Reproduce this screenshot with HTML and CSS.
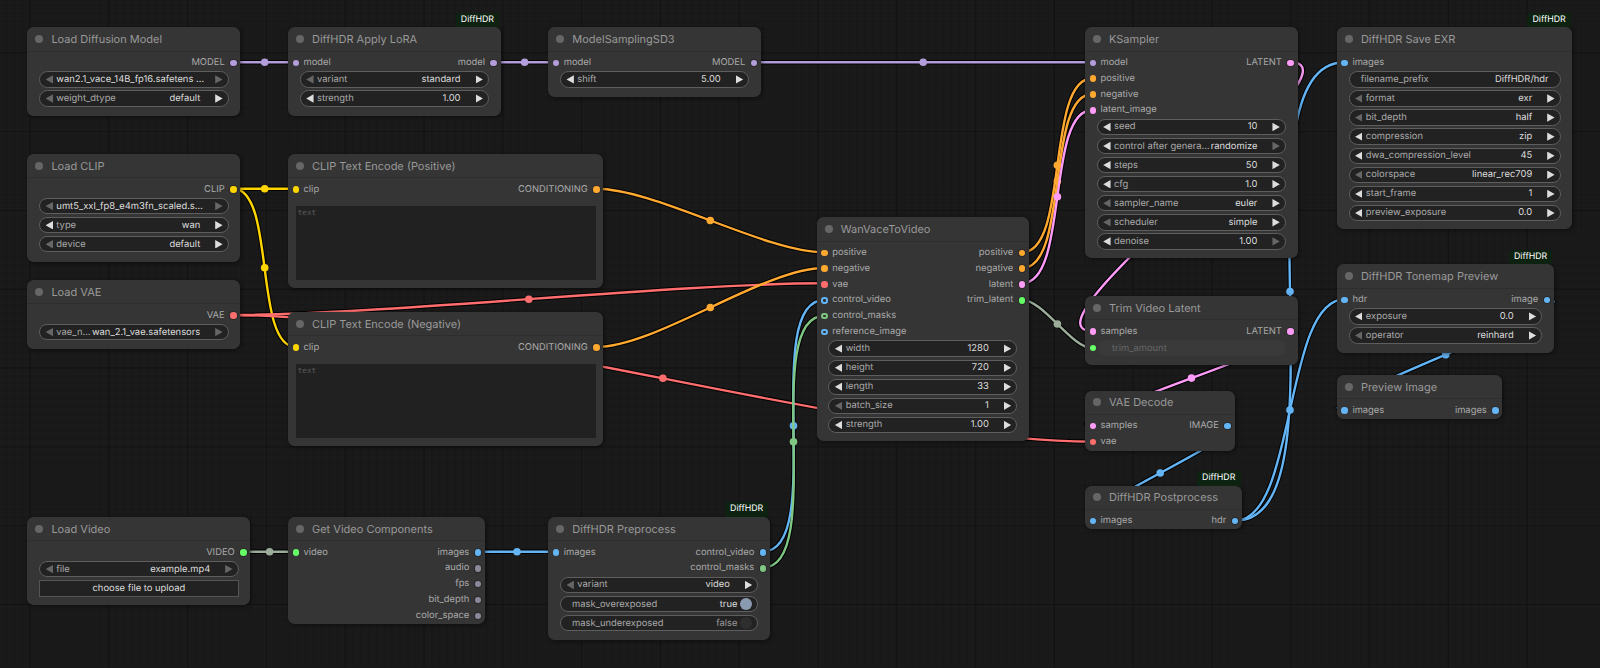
FILE: index.html
```html
<!DOCTYPE html>
<html lang="en">
<head>
    <meta charset="UTF-8">
    <title>DiffHDR workflow</title>
    <link rel="stylesheet" href="styles.css">
</head>
<body>
<div class="canvas">
    <svg class="links" width="1600" height="668" viewBox="0 0 1600 668">
        <g class="outline">
            <path d="M233.3 62.3H296"/>
            <path d="M493.6 62.3H556"/>
            <path d="M753.8 62.3H1092.4"/>
            <path d="M233.3 188.7H295.8"/>
            <path d="M233.3 188.7C275.8 188.7 253.3 347 295.8 347"/>
            <path d="M233.3 315C381 315 676 283.3 824.3 283.3"/>
            <path d="M233.3 315C450.3 315 875.4 441.7 1092.4 441.7"/>
            <path d="M596.3 188.7C655.5 188.7 765.1 252.3 824.3 252.3"/>
            <path d="M596.3 347C656.6 347 764 268 824.3 268"/>
            <path d="M1022.3 252.3C1069.2 252.3 1045.5 78.3 1092.4 78.3"/>
            <path d="M1022.3 268C1069.2 268 1045.5 94 1092.4 94"/>
            <path d="M1022.3 283.3C1069.2 283.3 1045.5 110 1092.4 110"/>
            <path d="M1022.3 300C1043.5 300 1071.5 348.3 1092.7 348.3"/>
            <path d="M1290.4 62.3C1373.8 62.3 1009.3 331 1092.7 331"/>
            <path d="M1290.3 331C1345 331 1038 425.3 1092.7 425.3"/>
            <path d="M1227.7 425.3C1269 425.3 1051.4 520.7 1092.7 520.7"/>
            <path d="M1235.2 520.7C1353 520.7 1227 62.3 1344.8 62.3"/>
            <path d="M1235.2 520.7C1297 520.7 1283 299.3 1344.8 299.3"/>
            <path d="M1546.5 299.3C1604 299.3 1287.3 410 1344.8 410"/>
            <path d="M243.3 551.7H295.7"/>
            <path d="M477.7 551.7H556.3"/>
            <path d="M762.7 551.7C827.5 551.7 759.5 300 824.3 300"/>
            <path d="M762.7 567.7C827.5 567.7 759.5 315.7 824.3 315.7"/>
        </g>
        <g class="wire model">
            <path d="M233.3 62.3H296"/><path d="M493.6 62.3H556"/><path d="M753.8 62.3H1092.4"/>
            <circle cx="264.7" cy="62.3" r="3.8"/><circle cx="524.6" cy="62.3" r="3.8"/><circle cx="923.2" cy="62.3" r="3.8"/>
        </g>
        <g class="wire clip">
            <path d="M233.3 188.7H295.8"/><path d="M233.3 188.7C275.8 188.7 253.3 347 295.8 347"/>
            <circle cx="264.7" cy="188.7" r="3.8"/><circle cx="264.7" cy="267.8" r="3.8"/>
        </g>
        <g class="wire vae">
            <path d="M233.3 315C381 315 676 283.3 824.3 283.3"/><path d="M233.3 315C450.3 315 875.4 441.7 1092.4 441.7"/>
            <circle cx="528.8" cy="299.2" r="3.8"/><circle cx="662.9" cy="378.3" r="3.8"/>
        </g>
        <g class="wire cond">
            <path d="M596.3 188.7C655.5 188.7 765.1 252.3 824.3 252.3"/><path d="M596.3 347C656.6 347 764 268 824.3 268"/>
            <path d="M1022.3 252.3C1069.2 252.3 1045.5 78.3 1092.4 78.3"/><path d="M1022.3 268C1069.2 268 1045.5 94 1092.4 94"/>
            <circle cx="710.3" cy="220.5" r="3.8"/><circle cx="710.3" cy="307.5" r="3.8"/>
            <circle cx="1057.4" cy="165.3" r="3.8"/><circle cx="1057.4" cy="181" r="3.8"/>
        </g>
        <g class="wire latent">
            <path d="M1022.3 283.3C1069.2 283.3 1045.5 110 1092.4 110"/>
            <path d="M1290.4 62.3C1373.8 62.3 1009.3 331 1092.7 331"/>
            <path d="M1290.3 331C1345 331 1038 425.3 1092.7 425.3"/>
            <circle cx="1057.4" cy="196.7" r="3.8"/><circle cx="1191.5" cy="378.1" r="3.8"/>
        </g>
        <g class="wire muted">
            <path d="M1022.3 300C1043.5 300 1071.5 348.3 1092.7 348.3"/><path d="M243.3 551.7H295.7"/>
            <circle cx="1057.4" cy="324" r="3.8"/><circle cx="269.6" cy="551.7" r="3.8"/>
        </g>
        <g class="wire image">
            <path d="M477.7 551.7H556.3"/>
            <path d="M1227.7 425.3C1269 425.3 1051.4 520.7 1092.7 520.7"/>
            <path d="M1235.2 520.7C1353 520.7 1227 62.3 1344.8 62.3"/>
            <path d="M1235.2 520.7C1297 520.7 1283 299.3 1344.8 299.3"/>
            <path d="M1546.5 299.3C1604 299.3 1287.3 410 1344.8 410"/>
            <path d="M762.7 551.7C827.5 551.7 759.5 300 824.3 300"/>
            <circle cx="517" cy="551.7" r="3.8"/><circle cx="1160.2" cy="473" r="3.8"/>
            <circle cx="1290" cy="291.5" r="3.8"/><circle cx="1290" cy="410" r="3.8"/>
            <circle cx="1445.7" cy="354.7" r="3.8"/><circle cx="793.5" cy="425.8" r="3.8"/>
        </g>
        <g class="wire mask">
            <path d="M762.7 567.7C827.5 567.7 759.5 315.7 824.3 315.7"/>
            <circle cx="793.5" cy="441.7" r="3.8"/>
        </g>
    </svg>

    <!-- top row -->
    <div class="node load-model">
        <div class="title"><i></i>Load Diffusion Model</div>
        <div class="rows">
            <div class="row"><span></span><span class="out">MODEL<b class="dot model"></b></span></div>
        </div>
        <div class="widgets">
            <div class="widget"><u class="arrow left dim"></u><span class="value name">wan2.1_vace_14B_fp16.safetens …</span><u class="arrow right dim"></u></div>
            <div class="widget"><u class="arrow left dim"></u><span class="label">weight_dtype</span><span class="value">default</span><u class="arrow right"></u></div>
        </div>
    </div>

    <div class="node apply-lora">
        <div class="badge">DiffHDR</div>
        <div class="title"><i></i>DiffHDR Apply LoRA</div>
        <div class="rows">
            <div class="row"><span class="in"><b class="dot model"></b>model</span><span class="out">model<b class="dot model"></b></span></div>
        </div>
        <div class="widgets">
            <div class="widget"><u class="arrow left dim"></u><span class="label">variant</span><span class="value">standard</span><u class="arrow right"></u></div>
            <div class="widget"><u class="arrow left"></u><span class="label">strength</span><span class="value">1.00</span><u class="arrow right"></u></div>
        </div>
    </div>

    <div class="node model-sampling">
        <div class="title"><i></i>ModelSamplingSD3</div>
        <div class="rows">
            <div class="row"><span class="in"><b class="dot model"></b>model</span><span class="out">MODEL<b class="dot model"></b></span></div>
        </div>
        <div class="widgets">
            <div class="widget"><u class="arrow left"></u><span class="label">shift</span><span class="value">5.00</span><u class="arrow right"></u></div>
        </div>
    </div>

    <div class="node ksampler">
        <div class="title"><i></i>KSampler</div>
        <div class="rows">
            <div class="row"><span class="in"><b class="dot model"></b>model</span><span class="out">LATENT<b class="dot latent"></b></span></div>
            <div class="row"><span class="in"><b class="dot cond"></b>positive</span></div>
            <div class="row"><span class="in"><b class="dot cond"></b>negative</span></div>
            <div class="row"><span class="in"><b class="dot latent"></b>latent_image</span></div>
        </div>
        <div class="widgets">
            <div class="widget"><u class="arrow left"></u><span class="label">seed</span><span class="value">10</span><u class="arrow right"></u></div>
            <div class="widget"><u class="arrow left"></u><span class="label">control after genera…</span><span class="value">randomize</span><u class="arrow right dim"></u></div>
            <div class="widget"><u class="arrow left"></u><span class="label">steps</span><span class="value">50</span><u class="arrow right"></u></div>
            <div class="widget"><u class="arrow left"></u><span class="label">cfg</span><span class="value">1.0</span><u class="arrow right"></u></div>
            <div class="widget"><u class="arrow left dim"></u><span class="label">sampler_name</span><span class="value">euler</span><u class="arrow right"></u></div>
            <div class="widget"><u class="arrow left dim"></u><span class="label">scheduler</span><span class="value">simple</span><u class="arrow right"></u></div>
            <div class="widget"><u class="arrow left"></u><span class="label">denoise</span><span class="value">1.00</span><u class="arrow right dim"></u></div>
        </div>
    </div>

    <div class="node save-exr">
        <div class="badge">DiffHDR</div>
        <div class="title"><i></i>DiffHDR Save EXR</div>
        <div class="rows">
            <div class="row"><span class="in"><b class="dot image"></b>images</span></div>
        </div>
        <div class="widgets">
            <div class="widget plain"><span class="label">filename_prefix</span><span class="value">DiffHDR/hdr</span></div>
            <div class="widget"><u class="arrow left dim"></u><span class="label">format</span><span class="value">exr</span><u class="arrow right"></u></div>
            <div class="widget"><u class="arrow left dim"></u><span class="label">bit_depth</span><span class="value">half</span><u class="arrow right"></u></div>
            <div class="widget"><u class="arrow left"></u><span class="label">compression</span><span class="value">zip</span><u class="arrow right"></u></div>
            <div class="widget"><u class="arrow left"></u><span class="label">dwa_compression_level</span><span class="value">45</span><u class="arrow right"></u></div>
            <div class="widget"><u class="arrow left dim"></u><span class="label">colorspace</span><span class="value">linear_rec709</span><u class="arrow right"></u></div>
            <div class="widget"><u class="arrow left"></u><span class="label">start_frame</span><span class="value">1</span><u class="arrow right"></u></div>
            <div class="widget"><u class="arrow left"></u><span class="label">preview_exposure</span><span class="value">0.0</span><u class="arrow right"></u></div>
        </div>
    </div>

    <!-- clip and vae column -->
    <div class="node load-clip">
        <div class="title"><i></i>Load CLIP</div>
        <div class="rows">
            <div class="row"><span></span><span class="out">CLIP<b class="dot clip"></b></span></div>
        </div>
        <div class="widgets">
            <div class="widget"><u class="arrow left dim"></u><span class="value name">umt5_xxl_fp8_e4m3fn_scaled.s…</span><u class="arrow right dim"></u></div>
            <div class="widget"><u class="arrow left"></u><span class="label">type</span><span class="value">wan</span><u class="arrow right"></u></div>
            <div class="widget"><u class="arrow left dim"></u><span class="label">device</span><span class="value">default</span><u class="arrow right"></u></div>
        </div>
    </div>

    <div class="node load-vae">
        <div class="title"><i></i>Load VAE</div>
        <div class="rows">
            <div class="row"><span></span><span class="out">VAE<b class="dot vae"></b></span></div>
        </div>
        <div class="widgets">
            <div class="widget"><u class="arrow left dim"></u><span class="label">vae_n…</span><span class="value">wan_2.1_vae.safetensors</span><u class="arrow right dim"></u></div>
        </div>
    </div>

    <div class="node clip-positive">
        <div class="title"><i></i>CLIP Text Encode (Positive)</div>
        <div class="rows">
            <div class="row"><span class="in"><b class="dot clip"></b>clip</span><span class="out">CONDITIONING<b class="dot cond"></b></span></div>
        </div>
        <div class="textbox">text</div>
    </div>

    <div class="node clip-negative">
        <div class="title"><i></i>CLIP Text Encode (Negative)</div>
        <div class="rows">
            <div class="row"><span class="in"><b class="dot clip"></b>clip</span><span class="out">CONDITIONING<b class="dot cond"></b></span></div>
        </div>
        <div class="textbox">text</div>
    </div>

    <div class="node wan-vace">
        <div class="title"><i></i>WanVaceToVideo</div>
        <div class="rows">
            <div class="row"><span class="in"><b class="dot cond"></b>positive</span><span class="out">positive<b class="dot cond"></b></span></div>
            <div class="row"><span class="in"><b class="dot cond"></b>negative</span><span class="out">negative<b class="dot cond"></b></span></div>
            <div class="row"><span class="in"><b class="dot vae"></b>vae</span><span class="out">latent<b class="dot latent"></b></span></div>
            <div class="row"><span class="in"><b class="dot ring image"></b>control_video</span><span class="out">trim_latent<b class="dot int"></b></span></div>
            <div class="row"><span class="in"><b class="dot ring mask"></b>control_masks</span></div>
            <div class="row"><span class="in"><b class="dot ring image"></b>reference_image</span></div>
        </div>
        <div class="widgets">
            <div class="widget"><u class="arrow left"></u><span class="label">width</span><span class="value">1280</span><u class="arrow right"></u></div>
            <div class="widget"><u class="arrow left"></u><span class="label">height</span><span class="value">720</span><u class="arrow right"></u></div>
            <div class="widget"><u class="arrow left"></u><span class="label">length</span><span class="value">33</span><u class="arrow right"></u></div>
            <div class="widget"><u class="arrow left dim"></u><span class="label">batch_size</span><span class="value">1</span><u class="arrow right"></u></div>
            <div class="widget"><u class="arrow left"></u><span class="label">strength</span><span class="value">1.00</span><u class="arrow right"></u></div>
        </div>
    </div>

    <!-- right side -->
    <div class="node trim-latent">
        <div class="title"><i></i>Trim Video Latent</div>
        <div class="rows">
            <div class="row"><span class="in"><b class="dot latent"></b>samples</span><span class="out">LATENT<b class="dot latent"></b></span></div>
        </div>
        <div class="linked"><b class="dot int"></b><div class="widget off"><span class="label">trim_amount</span></div></div>
    </div>

    <div class="node vae-decode">
        <div class="title"><i></i>VAE Decode</div>
        <div class="rows">
            <div class="row"><span class="in"><b class="dot latent"></b>samples</span><span class="out">IMAGE<b class="dot image"></b></span></div>
            <div class="row"><span class="in"><b class="dot vae"></b>vae</span></div>
        </div>
    </div>

    <div class="node postprocess">
        <div class="badge">DiffHDR</div>
        <div class="title"><i></i>DiffHDR Postprocess</div>
        <div class="rows">
            <div class="row"><span class="in"><b class="dot image"></b>images</span><span class="out">hdr<b class="dot image"></b></span></div>
        </div>
    </div>

    <div class="node tonemap">
        <div class="badge">DiffHDR</div>
        <div class="title"><i></i>DiffHDR Tonemap Preview</div>
        <div class="rows">
            <div class="row"><span class="in"><b class="dot image"></b>hdr</span><span class="out">image<b class="dot image"></b></span></div>
        </div>
        <div class="widgets">
            <div class="widget"><u class="arrow left"></u><span class="label">exposure</span><span class="value">0.0</span><u class="arrow right"></u></div>
            <div class="widget"><u class="arrow left dim"></u><span class="label">operator</span><span class="value">reinhard</span><u class="arrow right"></u></div>
        </div>
    </div>

    <div class="node preview">
        <div class="title"><i></i>Preview Image</div>
        <div class="rows">
            <div class="row"><span class="in"><b class="dot image"></b>images</span><span class="out">images<b class="dot image"></b></span></div>
        </div>
    </div>

    <!-- video row -->
    <div class="node load-video">
        <div class="title"><i></i>Load Video</div>
        <div class="rows">
            <div class="row"><span></span><span class="out">VIDEO<b class="dot int"></b></span></div>
        </div>
        <div class="widgets">
            <div class="widget"><u class="arrow left dim"></u><span class="label">file</span><span class="value">example.mp4</span><u class="arrow right dim"></u></div>
            <div class="upload">choose file to upload</div>
        </div>
    </div>

    <div class="node video-parts">
        <div class="title"><i></i>Get Video Components</div>
        <div class="rows">
            <div class="row"><span class="in"><b class="dot int"></b>video</span><span class="out">images<b class="dot image"></b></span></div>
            <div class="row"><span></span><span class="out">audio<b class="dot other"></b></span></div>
            <div class="row"><span></span><span class="out">fps<b class="dot other"></b></span></div>
            <div class="row"><span></span><span class="out">bit_depth<b class="dot other"></b></span></div>
            <div class="row"><span></span><span class="out">color_space<b class="dot other"></b></span></div>
        </div>
    </div>

    <div class="node preprocess">
        <div class="badge">DiffHDR</div>
        <div class="title"><i></i>DiffHDR Preprocess</div>
        <div class="rows">
            <div class="row"><span class="in"><b class="dot image"></b>images</span><span class="out">control_video<b class="dot image"></b></span></div>
            <div class="row"><span></span><span class="out">control_masks<b class="dot mask"></b></span></div>
        </div>
        <div class="widgets">
            <div class="widget"><u class="arrow left dim"></u><span class="label">variant</span><span class="value">video</span><u class="arrow right"></u></div>
            <div class="widget plain"><span class="label">mask_overexposed</span><span class="value">true</span><em class="knob on"></em></div>
            <div class="widget plain"><span class="label">mask_underexposed</span><span class="value off">false</span><em class="knob"></em></div>
        </div>
    </div>
</div>
</body>
</html>
```
FILE: styles.css
```css
* {
    box-sizing: border-box;
}
html, body {
    margin: 0;
    padding: 0;
    background: #181818;
}
.canvas {
    position: relative;
    width: 1600px;
    height: 668px;
    overflow: hidden;
    font-family: Inter, "Liberation Sans", sans-serif;
    text-rendering: geometricPrecision;
    background-color: #1a1a1a;
    background-image:
        linear-gradient(#121212 1px, transparent 1px),
        linear-gradient(90deg, #121212 1px, transparent 1px),
        linear-gradient(#171717 1px, transparent 1px),
        linear-gradient(90deg, #171717 1px, transparent 1px);
    background-size: 78.8px 78.8px, 78.8px 78.8px, 7.88px 7.88px, 7.88px 7.88px;
    background-position: 29.6px 52.4px, 29.6px 52.4px, 5.96px 5.12px, 5.96px 5.12px;
}

/* links */
.links {
    position: absolute;
    left: 0;
    top: 0;
}
.links path {
    fill: none;
}
.outline path {
    stroke: #000;
    stroke-width: 4.4;
}
.wire path {
    stroke-width: 2.4;
}
.wire.model path { stroke: #b39ddb; }
.wire.model circle { fill: #b39ddb; }
.wire.clip path { stroke: #ffd500; }
.wire.clip circle { fill: #ffd500; }
.wire.vae path { stroke: #ff6e6e; }
.wire.vae circle { fill: #ff6e6e; }
.wire.cond path { stroke: #ffa931; }
.wire.cond circle { fill: #ffa931; }
.wire.latent path { stroke: #ff9cf9; }
.wire.latent circle { fill: #ff9cf9; }
.wire.muted path { stroke: #9cad9c; }
.wire.muted circle { fill: #9cad9c; }
.wire.image path { stroke: #64b5f6; }
.wire.image circle { fill: #64b5f6; }
.wire.mask path { stroke: #81c784; }
.wire.mask circle { fill: #81c784; }

/* nodes sit freely on the canvas */
.node {
    position: absolute;
    background: #353535;
    border-radius: 6.5px;
    box-shadow: 1px 1px 4px rgba(0, 0, 0, 0.5);
    font-size: 9.4px;
    color: #aaa;
}
.load-model { left: 27.4px; top: 27.3px; width: 213px; height: 88.4px; }
.apply-lora { left: 288px; top: 27.3px; width: 212.7px; height: 88.4px; }
.model-sampling { left: 548.3px; top: 27.3px; width: 212.7px; height: 69.7px; }
.ksampler { left: 1085px; top: 27.3px; width: 212.6px; height: 230.5px; }
.save-exr { left: 1336.9px; top: 27.3px; width: 235.5px; height: 202px; }
.load-clip { left: 27.4px; top: 154px; width: 213px; height: 107.5px; }
.load-vae { left: 27.4px; top: 280px; width: 213px; height: 69.3px; }
.clip-positive { left: 288px; top: 154px; width: 315.4px; height: 133.7px; }
.clip-negative { left: 288px; top: 312px; width: 315.4px; height: 134px; }
.wan-vace { left: 816.7px; top: 217.3px; width: 212.3px; height: 223.7px; }
.trim-latent { left: 1085px; top: 296px; width: 212.6px; height: 69.3px; }
.vae-decode { left: 1085px; top: 390.7px; width: 149.6px; height: 60px; }
.postprocess { left: 1085px; top: 485.7px; width: 157px; height: 43.6px; }
.tonemap { left: 1336.9px; top: 264.3px; width: 217px; height: 88.4px; }
.preview { left: 1336.9px; top: 375px; width: 165.6px; height: 44px; }
.load-video { left: 27.4px; top: 517px; width: 223px; height: 88.3px; }
.video-parts { left: 288px; top: 517px; width: 197px; height: 107.3px; }
.preprocess { left: 548.3px; top: 517px; width: 221.7px; height: 123px; }

.badge {
    position: absolute;
    right: 1.5px;
    top: -14.6px;
    width: 43.6px;
    height: 14.6px;
    background: #0e2211;
    border-radius: 3px 3px 0 0;
    color: #fff;
    font-size: 8.8px;
    line-height: 14.6px;
    text-align: center;
}
.title {
    display: flex;
    align-items: center;
    gap: 8px;
    height: 24.4px;
    padding-left: 8px;
    border-bottom: 1px solid #2e2e2e;
    color: #999;
    font-size: 11px;
}
.title i {
    width: 8px;
    height: 8px;
    border-radius: 50%;
    background: #666;
}
.rows {
    padding-top: 3.2px;
}
.row {
    display: flex;
    justify-content: space-between;
    height: 15.85px;
    line-height: 15.85px;
}
.in, .out {
    display: flex;
    align-items: center;
}
.in {
    gap: 4.4px;
    padding-left: 4.5px;
}
.out {
    gap: 5.4px;
    padding-right: 3.7px;
}
.dot {
    width: 6.6px;
    height: 6.6px;
    border-radius: 50%;
    flex: none;
}
.out .dot {
    box-shadow: 0 0 0 1px #2a2a2a;
}
.dot.model { background: #b39ddb; }
.dot.clip { background: #ffd500; }
.dot.vae { background: #ff6e6e; }
.dot.cond { background: #ffa931; }
.dot.latent { background: #ff9cf9; }
.dot.image { background: #64b5f6; }
.dot.mask { background: #81c784; }
.dot.int { background: #66ff66; }
.dot.other { background: #8a8a9a; }
.dot.ring {
    background: #2c2c2c;
    border: 2.2px solid #64b5f6;
}
.dot.ring.mask {
    border-color: #81c784;
}

/* widgets */
.widgets {
    display: flex;
    flex-direction: column;
    gap: 2.7px;
    margin-top: 0.5px;
    padding: 0 11.8px;
}
.widget {
    display: flex;
    align-items: center;
    flex: none;
    height: 16.4px;
    padding: 0 5px 0 5.4px;
    background: #222;
    border: 1px solid #5e5e5e;
    border-radius: 9px;
    white-space: nowrap;
}
.arrow {
    flex: none;
    width: 7.4px;
    height: 8.4px;
    background: #ddd;
}
.arrow.left {
    clip-path: polygon(100% 0, 100% 100%, 0 50%);
}
.arrow.right {
    clip-path: polygon(0 0, 100% 50%, 0 100%);
}
.arrow.dim {
    background: #666;
}
.label {
    flex: 1;
    margin-left: 3.4px;
}
.value {
    margin-right: 15px;
    color: #ddd;
}
.value.name {
    flex: 1;
    margin-left: 3.4px;
    margin-right: 0;
}
.value.off {
    color: #999;
}
.plain {
    padding: 0 5.6px 0 7.6px;
}
.plain .value {
    margin-right: 5.4px;
}
.knob {
    flex: none;
    width: 11.8px;
    height: 11.8px;
    margin-left: -3px;
    border-radius: 50%;
    background: #2e2e2e;
}
.knob.on {
    background: #8a9ab0;
}
.upload {
    height: 17.4px;
    margin-top: -0.5px;
    background: #222;
    border: 1px solid #555;
    color: #ddd;
    line-height: 15.4px;
    text-align: center;
}
.textbox {
    height: 74.3px;
    margin: 8.6px 7.8px 0;
    padding: 1.5px 2px;
    background: #212121;
    color: #5a5a5a;
    font-family: "DejaVu Sans Mono", monospace;
    font-size: 7.6px;
}

/* an input turned into a link: dot on the left of a greyed widget */
.linked {
    display: flex;
    align-items: center;
    gap: 1.8px;
    margin-top: 0.5px;
    padding: 0 11.8px 0 4.5px;
}
.widget.off {
    flex: 1;
    background: #3a3a3a;
    border: 0;
    color: #666;
    padding-left: 10.7px;
}
```
